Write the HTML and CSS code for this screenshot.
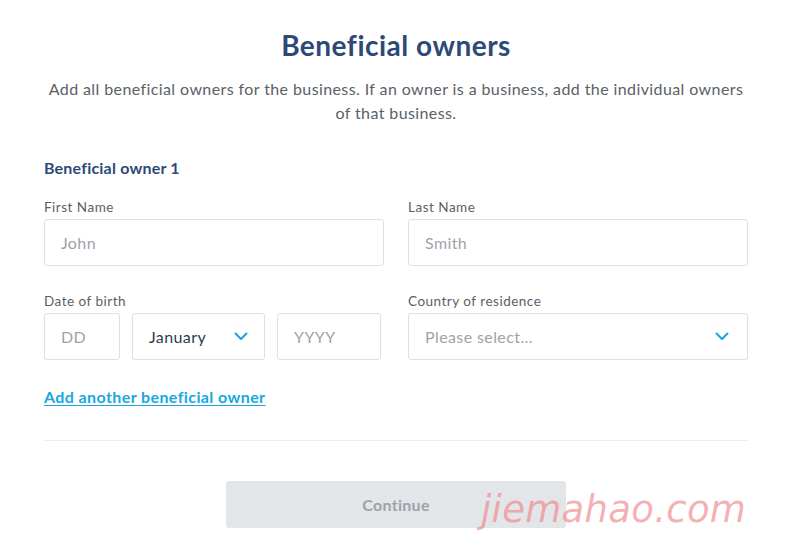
FILE: index.html
```html
<!DOCTYPE html>
<html>
<head>
<meta charset="utf-8">
<link rel="stylesheet" href="styles.css">
</head>
<body>
<main class="page">
  <h1 class="title">Beneficial owners</h1>
  <p class="intro">Add all beneficial owners for the business. If an owner is a business, add the individual owners of that business.</p>

  <h2 class="section">Beneficial owner 1</h2>

  <div class="row">
    <div class="field">
      <label class="label">First Name</label>
      <div class="input"><span class="ph">John</span></div>
    </div>
    <div class="field">
      <label class="label">Last Name</label>
      <div class="input"><span class="ph">Smith</span></div>
    </div>
  </div>

  <div class="row">
    <div class="field">
      <label class="label">Date of birth</label>
      <div class="dob">
        <div class="input dd"><span class="ph">DD</span></div>
        <div class="input select month"><span class="val">January</span>
          <svg class="chev" width="14" height="9" viewBox="0 0 14 9"><path d="M1.5 1.5 L7 7 L12.5 1.5" fill="none" stroke="#1ea1da" stroke-width="2" stroke-linecap="round" stroke-linejoin="round"/></svg>
        </div>
        <div class="input yyyy"><span class="ph">YYYY</span></div>
      </div>
    </div>
    <div class="field">
      <label class="label">Country of residence</label>
      <div class="input select"><span class="ph">Please select...</span>
        <svg class="chev" width="14" height="9" viewBox="0 0 14 9"><path d="M1.5 1.5 L7 7 L12.5 1.5" fill="none" stroke="#1ea1da" stroke-width="2" stroke-linecap="round" stroke-linejoin="round"/></svg>
      </div>
    </div>
  </div>

  <a class="add" href="#">Add another beneficial owner</a>

  <hr class="divider">

  <div class="actions">
    <button class="continue">Continue</button>
  </div>
</main>
<div class="watermark">jiemahao.com</div>
</body>
</html>
```

FILE: styles.css
```css
* { box-sizing: border-box; }
html, body { margin: 0; padding: 0; background: #fff; }
body {
  font-family: Lato, "Noto Sans", sans-serif;
  width: 800px;
  height: 555px;
  overflow: hidden;
  position: relative;
}
.page {
  width: 704px;
  margin-left: 44px;
  padding-top: 28px;
}
.title {
  margin: 0;
  text-align: center;
  font-size: 28px;
  font-weight: 700;
  color: #2d4a77;
  line-height: 34px;
  letter-spacing: 0.5px;
}
.intro {
  margin: 15px 0 0;
  text-align: center;
  font-size: 16px;
  line-height: 24px;
  color: #5b6067;
  letter-spacing: 0.4px;
}
.section {
  margin: 33px 0 0;
  font-size: 16px;
  font-weight: 700;
  color: #2d4a77;
  line-height: 20px;
  letter-spacing: 0.2px;
}
.row {
  display: grid;
  grid-template-columns: 1fr 1fr;
  column-gap: 24px;
}
.row + .row { margin-top: 26px; }
.section + .row { margin-top: 20px; }
.label {
  display: block;
  font-size: 13.5px;
  line-height: 18px;
  color: #5b6067;
  margin-bottom: 3px;
  letter-spacing: 0.5px;
}
.input {
  height: 47px;
  border: 1px solid #dde0e4;
  border-radius: 3px;
  display: flex;
  align-items: center;
  padding: 0 16px;
  font-size: 16px;
  letter-spacing: 0.4px;
  background: #fff;
}
.ph { color: #9ea3a9; }
.val { color: #2e3b52; }
.select { justify-content: space-between; padding-right: 18px; }
.month { padding-right: 16px; }
.chev { display: block; }
.dob {
  display: grid;
  grid-template-columns: 76px 133px 104px;
  column-gap: 12px;
}
.add {
  display: inline-block;
  margin-top: 27px;
  font-size: 16px;
  font-weight: 700;
  color: #1aa7e2;
  text-decoration: underline;
  text-underline-offset: 2px;
  line-height: 20px;
  letter-spacing: 0.4px;
}
.divider {
  margin: 33px 0 0;
  border: 0;
  border-top: 1px solid #eceef1;
}
.actions {
  display: flex;
  justify-content: center;
  margin-top: 40px;
}
.continue {
  width: 340px;
  height: 47px;
  border: 0;
  border-radius: 3px;
  background: #e3e6e9;
  color: #9da2a8;
  font-family: Lato, "Noto Sans", sans-serif;
  font-size: 16px;
  font-weight: 700;
  letter-spacing: 0.3px;
}
.watermark {
  position: absolute;
  left: 481px;
  top: 482px;
  font-family: "DejaVu Sans", sans-serif;
  font-style: italic;
  font-size: 37px;
  color: rgba(240, 130, 135, 0.65);
  letter-spacing: 0.3px;
  line-height: 56px;
}
```
